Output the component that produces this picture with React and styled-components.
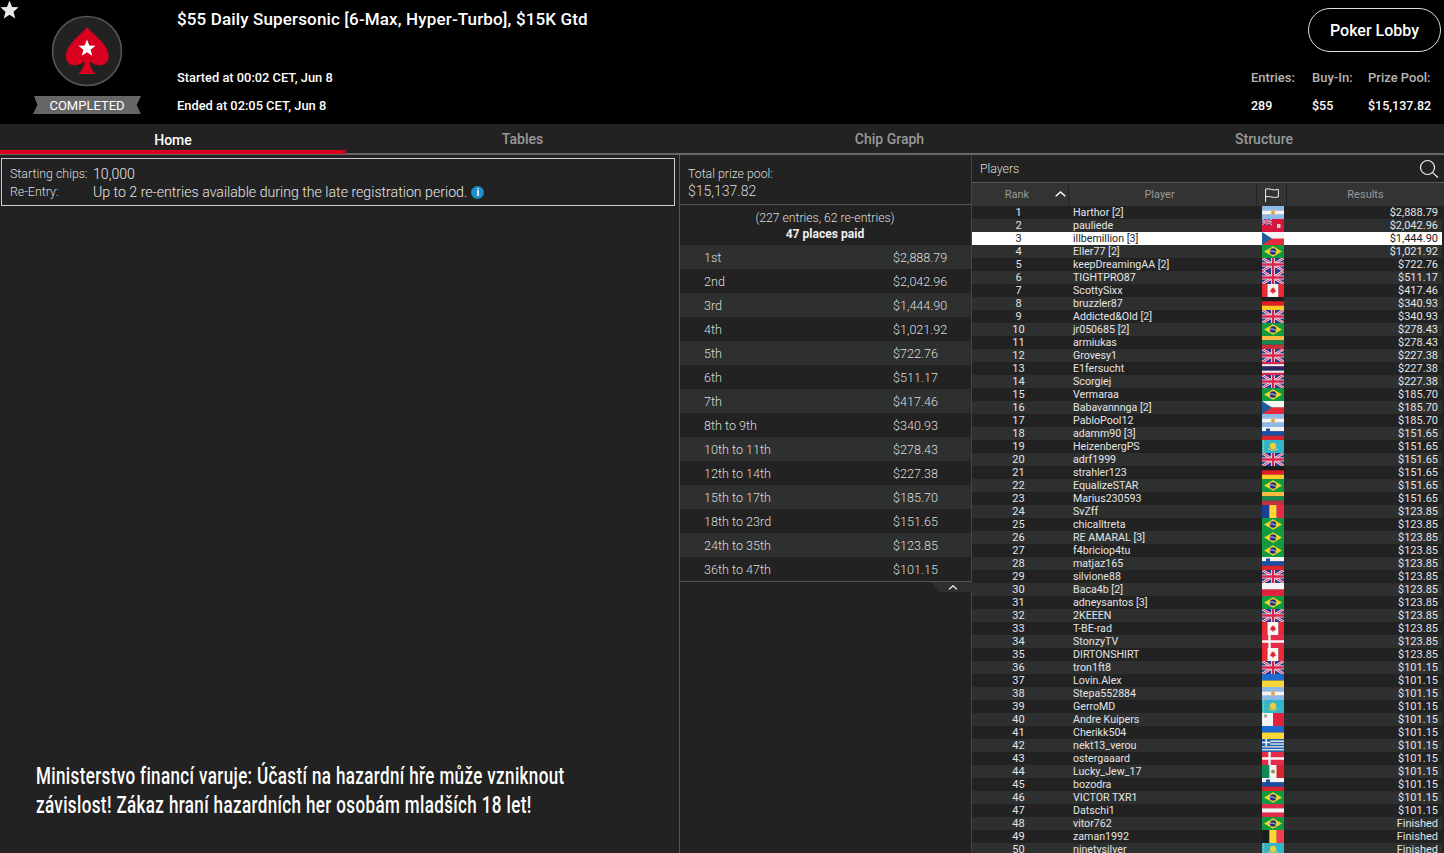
import React from "react";
import styled, { createGlobalStyle } from "styled-components";

const Global = createGlobalStyle`
  html, body { margin: 0; padding: 0; background: #222; }
  body { font-family: Roboto, "Liberation Sans", sans-serif; overflow: hidden; }
  * { box-sizing: border-box; }
`;

const Page = styled.div`
  width: 1444px; height: 853px; overflow: hidden; display: flex; flex-direction: column; background: #222; color: #fff;
`;
const Header = styled.header`
  position: relative; height: 124px; background: #000; display: flex; flex: none;
`;
const Fav = styled.svg`
  position: absolute; left: 0; top: 0; width: 19px; height: 19px;
`;
const LogoCol = styled.div`
  width: 177px; flex: none; display: flex; flex-direction: column; align-items: center; padding: 14px 3px 0 0;
`;
const Banner = styled.div`
  width: 108px; height: 18px; margin-top: 8px; background: #666; color: #fff; font-size: 13px; font-weight: 400; line-height: 19px; text-align: center;
  clip-path: polygon(1% 0, 100% 0, 96% 50%, 100% 100%, 0 100%, 4% 50%);
`;
const Info = styled.div`
  flex: 1; display: flex; flex-direction: column; padding-top: 8px;
`;
const Title = styled.h1`
  margin: 0 0 40px; font-size: 17px; line-height: 22px; font-weight: 500; letter-spacing: 0.14px; color: #fff;
`;
const InfoLine = styled.div`
  font-size: 12.85px; line-height: 16px; font-weight: 500; margin-bottom: 12px; color: #fff;
`;
const Side = styled.div`
  width: 193px; flex: none; display: flex; flex-direction: column; align-items: flex-end; padding: 8px 3px 0 0;
`;
const Lobby = styled.button`
  width: 133px; height: 44px; border: 1px solid #ddd; border-radius: 22px; background: transparent; color: #fff; font: 500 16px Roboto, sans-serif; padding: 0;
`;
const Stats = styled.div`
  display: flex; align-self: flex-start; margin-top: 18px;
`;
const Stat = styled.div`
  width: ${p => p.$w}px; display: flex; flex-direction: column; gap: 12px; font-size: 13px; line-height: 16px;
`;
const StatLabel = styled.span`
  color: #b5b5b5; font-weight: 500; white-space: nowrap;
`;
const StatValue = styled.span`
  color: #fff; font-weight: 500; font-size: 12.5px; white-space: nowrap;
`;
const Tabs = styled.nav`
  height: 31px; flex: none; display: grid; grid-template-columns: 346px 353px 381px 364px; border-bottom: 2px solid #666; background: #222;
`;
const Tab = styled.div`
  height: 30px; text-align: center; font-size: 14px; font-weight: 500; color: ${p => (p.$active ? "#fff" : "#999")};
  border-bottom: ${p => (p.$active ? "4px solid #d9001f" : "none")};
  line-height: ${p => (p.$active ? "33px" : "31px")};
  padding-left: ${p => p.$shift || 0}px;
`;
const Body = styled.main`
  flex: 1; min-height: 0; display: grid; grid-template-columns: 680px 292px 472px;
`;
const Left = styled.section`
  display: flex; flex-direction: column; justify-content: space-between; padding: 3px 4px 33px 1px; border-right: 1px solid #555;
`;
const Notice = styled.div`
  height: 48px; border: 1px solid #ccc; padding: 6px 8px; display: grid; grid-template-columns: 83px 1fr; align-content: start;
`;
const NoticeLabel = styled.span`
  font-size: 12.4px; line-height: 18px; font-weight: 300; color: #ddd; white-space: nowrap;
`;
const NoticeValue = styled.span`
  font-size: 14.15px; line-height: 18px; font-weight: 300; color: #e6e6e6; white-space: nowrap; display: flex; align-items: center; gap: 4px;
`;
const InfoDot = styled.span`
  width: 13px; height: 13px; border-radius: 50%; background: #1b8ecb; color: #fff; font-size: 10px; font-weight: 700; line-height: 13px; text-align: center;
`;
const Warning = styled.p`
  margin: 0 0 0 35px; width: 760px; font-size: 23px; line-height: 29px; font-weight: 500; letter-spacing: 0.5px; color: #fff; white-space: nowrap;
  transform: scaleX(0.74); transform-origin: left center;
`;
const Prize = styled.section`
  display: flex; flex-direction: column; min-width: 0;
`;
const PoolHead = styled.div`
  height: 50px; flex: none; padding: 11px 8px 0; border-bottom: 1px solid #555; color: #ddd; font-weight: 300;
`;
const PoolLabel = styled.div`
  font-size: 12.3px; line-height: 16px;
`;
const PoolValue = styled.div`
  font-size: 14px; line-height: 18px;
`;
const Paid = styled.div`
  height: 40px; flex: none; padding: 5px 2px 0 0; text-align: center; font-size: 12.2px; line-height: 16px; font-weight: 300; color: #ddd;
  strong { display: block; font-weight: 700; font-size: 12.1px; color: #eee; }
`;
const PrizeRow = styled.div`
  height: 24px; flex: none; display: grid; grid-template-columns: 189px 1fr; padding-left: 24px; align-items: center; font-size: 12.6px; font-weight: 300; color: #ddd;
  background: ${p => (p.$odd ? "#2e3030" : "#222")};
`;
const PrizeFoot = styled.div`
  height: 12px; flex: none; border-top: 1px solid #555; display: flex; justify-content: flex-end;
`;
const Collapse = styled.div`
  width: 41px; height: 10px; background: #2e3030; display: flex; align-items: center; justify-content: center;
  clip-path: polygon(0 0, 100% 0, 100% 100%, 22% 100%);
  padding-left: 2px;
`;
const Players = styled.section`
  display: flex; flex-direction: column; min-width: 0; overflow: hidden; border-left: 1px solid #444; margin-left: -1px;
`;
const PlayersHead = styled.div`
  height: 28px; flex: none; display: flex; align-items: center; justify-content: space-between; padding: 1px 5px 0 8px; border-bottom: 1px solid #555; font-size: 12.3px; font-weight: 300; color: #ddd;
`;
const Columns = `display: grid; grid-template-columns: 97px 188px 30px 157px;`;
const TableHead = styled.div`
  ${Columns}
  height: 23px; flex: none; background: #333; font-size: 11px; color: #999; font-weight: 400;
`;
const HeadCell = styled.div`
  position: relative; display: flex; align-items: center; justify-content: center; border-right: 1px solid #222;
  padding-right: ${p => p.$pr || 0}px;
  &:last-child { border-right: none; padding-right: 0; }
`;
const SortMark = styled.svg`
  position: absolute; right: 2px; top: 8px;
`;
const Row = styled.div`
  ${Columns}
  height: 13px; flex: none; width: 470px; font-size: 11px; line-height: 14px; white-space: nowrap;
  background: ${p => (p.$me ? "#fff" : p.$odd ? "#222" : "#2e3030")};
  color: ${p => (p.$me ? "#1c1c1c" : "#e4e4e4")};
`;
const RankCell = styled.span`
  text-align: center; padding-right: 4px;
`;
const NameCell = styled.span`
  padding-left: 4px; overflow: hidden; font-size: 10.65px;
`;
const FlagCell = styled.span`
  display: flex; justify-content: center; padding-left: 1px; overflow: hidden;
`;
const ResultCell = styled.span`
  text-align: right; padding-right: 6px;
`;
const FlagSvg = styled.svg`
  width: 22px; height: 13px; display: block; flex: none;
`;

const Band = ({ colors, vertical }) =>
  colors.map((c, i) =>
    vertical ? (
      <rect key={i} x={(i * 22) / colors.length} y="0" width={22 / colors.length + 0.1} height="13" fill={c} />
    ) : (
      <rect key={i} x="0" y={(i * 13) / colors.length} width="22" height={13 / colors.length + 0.1} fill={c} />
    )
  );

const UnionJack = () => (
  <>
    <rect width="22" height="13" fill="#2b3a8c" />
    <path d="M0 0L22 13M22 0L0 13" stroke="#f1e6ea" strokeWidth="2.6" />
    <path d="M0 0L22 13M22 0L0 13" stroke="#d8264f" strokeWidth="1" />
    <path d="M11 0V13M0 6.5H22" stroke="#f1e6ea" strokeWidth="4" />
    <path d="M11 0V13M0 6.5H22" stroke="#d8264f" strokeWidth="2.4" />
  </>
);

const FLAGS = {
  ar: () => (<><Band colors={["#8db9e6", "#f4f4f4", "#8db9e6"]} /><circle cx="11" cy="6.5" r="2" fill="#e9a23b" /></>),
  bm: () => (
    <>
      <rect width="22" height="13" fill="#d5173f" />
      <g transform="scale(.45)"><UnionJack /></g>
      <rect x="15" y="5" width="3.5" height="4" fill="#c9d3cf" />
    </>
  ),
  cz: () => (<><Band colors={["#f4f4f4", "#e6283a"]} /><path d="M0 0L10 6.5L0 13Z" fill="#1d5d9b" /></>),
  br: () => (<><rect width="22" height="13" fill="#0f9b3e" /><path d="M11 1.3L20 6.5L11 11.7L2 6.5Z" fill="#f2d22e" /><circle cx="11" cy="6.5" r="3.2" fill="#1c2f7c" /><path d="M8 6Q11 5.4 14 7.4" stroke="#eee" strokeWidth=".8" fill="none" /></>),
  gb: UnionJack,
  ca: () => (<><Band vertical colors={["#ea2a35", "#f7f7f7", "#f7f7f7", "#ea2a35"]} /><path d="M11 3L12 4.8L13.2 4.4L12.8 6.6L14 6.6L13.6 7.9L11.4 8.8V10H10.6V8.8L8.4 7.9L8 6.6L9.2 6.6L8.8 4.4L10 4.8Z" fill="#e3242f" /></>),
  de: () => <Band colors={["#1c1c1c", "#e31b23", "#fcca27"]} />,
  lt: () => <Band colors={["#fdbb3f", "#158a54", "#c4303c"]} />,
  th: () => <Band colors={["#d8264f", "#f2f2f2", "#2b2a6b", "#2b2a6b", "#f2f2f2", "#d8264f"]} />,
  si: () => (<><Band colors={["#f4f4f4", "#1a4fa8", "#d9262e"]} /><path d="M4 1.5H8V4.5Q6 6.5 4 4.5Z" fill="#1a4fa8" /></>),
  kz: () => (<><rect width="22" height="13" fill="#33b5c9" /><circle cx="11" cy="6" r="3.2" fill="#f0cf3a" /><path d="M1.5 0V13" stroke="#e2c83d" strokeWidth="1.4" strokeDasharray="1 1" /><path d="M6 8.5Q11 12 16 8.5" stroke="#f0cf3a" strokeWidth="1" fill="none" /></>),
  ro: () => <Band vertical colors={["#1b3f95", "#fcd53a", "#e6284a"]} />,
  pl: () => <Band colors={["#f5f5f5", "#e0223f"]} />,
  dk: () => (<><rect width="22" height="13" fill="#e62a4a" /><path d="M7.5 0V13M0 6.5H22" stroke="#f7f7f7" strokeWidth="2.4" /></>),
  ua: () => <Band colors={["#1c6cd0", "#fcd53a"]} />,
  mt: () => (<><Band vertical colors={["#f2f2f2", "#e0223f"]} /><circle cx="3.5" cy="3" r="1.8" fill="#a9a9a9" /></>),
  gr: () => (
    <>
      <Band colors={["#1a62b8", "#f4f4f4", "#1a62b8", "#f4f4f4", "#1a62b8", "#f4f4f4", "#1a62b8", "#f4f4f4", "#1a62b8"]} />
      <rect width="8.5" height="7.2" fill="#1a62b8" />
      <path d="M4.2 0V7.2M0 3.6H8.5" stroke="#f4f4f4" strokeWidth="1.5" />
    </>
  ),
  mx: () => (<><Band vertical colors={["#0f8a55", "#f4f4f4", "#d9262e"]} /><circle cx="11" cy="6.5" r="2" fill="#a98a52" /></>),
  at: () => <Band colors={["#e62a4a", "#f4f4f4", "#e62a4a"]} />,
  be: () => <Band vertical colors={["#1c1c1c", "#fcd53a", "#ef3e4f"]} />,
};

const Flag = ({ code }) => {
  const Art = FLAGS[code];
  return (
    <FlagSvg viewBox="0 0 22 13" preserveAspectRatio="none">
      <Art />
    </FlagSvg>
  );
};

const PRIZES = [
  ["1st", "$2,888.79"], ["2nd", "$2,042.96"], ["3rd", "$1,444.90"], ["4th", "$1,021.92"], ["5th", "$722.76"],
  ["6th", "$511.17"], ["7th", "$417.46"], ["8th to 9th", "$340.93"], ["10th to 11th", "$278.43"], ["12th to 14th", "$227.38"],
  ["15th to 17th", "$185.70"], ["18th to 23rd", "$151.65"], ["24th to 35th", "$123.85"], ["36th to 47th", "$101.15"],
];

const PLAYERS = [
  ["Harthor [2]", "ar", "$2,888.79"], ["pauliede", "bm", "$2,042.96"], ["illbemillion [3]", "cz", "$1,444.90"],
  ["Eller77 [2]", "br", "$1,021.92"], ["keepDreamingAA [2]", "gb", "$722.76"], ["TIGHTPRO87", "gb", "$511.17"],
  ["ScottySixx", "ca", "$417.46"], ["bruzzler87", "de", "$340.93"], ["Addicted&Old [2]", "gb", "$340.93"],
  ["jr050685 [2]", "br", "$278.43"], ["armiukas", "lt", "$278.43"], ["Grovesy1", "gb", "$227.38"],
  ["E1fersucht", "th", "$227.38"], ["Scorgiej", "gb", "$227.38"], ["Vermaraa", "br", "$185.70"],
  ["Babavannnga [2]", "cz", "$185.70"], ["PabloPool12", "ar", "$185.70"], ["adamm90 [3]", "si", "$151.65"],
  ["HeizenbergPS", "kz", "$151.65"], ["adrf1999", "gb", "$151.65"], ["strahler123", "de", "$151.65"],
  ["EqualizeSTAR", "br", "$151.65"], ["Marius230593", "lt", "$151.65"], ["SvZff", "ro", "$123.85"],
  ["chicalltreta", "br", "$123.85"], ["RE AMARAL [3]", "br", "$123.85"], ["f4briciop4tu", "br", "$123.85"],
  ["matjaz165", "si", "$123.85"], ["silvione88", "gb", "$123.85"], ["Baca4b [2]", "pl", "$123.85"],
  ["adneysantos [3]", "br", "$123.85"], ["2KEEEN", "gb", "$123.85"], ["T-BE-rad", "ca", "$123.85"],
  ["StonzyTV", "dk", "$123.85"], ["DIRTONSHIRT", "ca", "$123.85"], ["tron1ft8", "gb", "$101.15"],
  ["Lovin.Alex", "ua", "$101.15"], ["Stepa552884", "ar", "$101.15"], ["GerroMD", "kz", "$101.15"],
  ["Andre Kuipers", "mt", "$101.15"], ["Cherikk504", "ua", "$101.15"], ["nekt13_verou", "gr", "$101.15"],
  ["ostergaaard", "dk", "$101.15"], ["Lucky_Jew_17", "mx", "$101.15"], ["bozodra", "si", "$101.15"],
  ["VICTOR TXR1", "br", "$101.15"], ["Datschi1", "at", "$101.15"], ["vitor762", "br", "Finished"],
  ["zaman1992", "be", "Finished"], ["ninetysilver", "kz", "Finished"],
];

const Chevron = ({ w = 11, h = 6, color = "#fff" }) => (
  <svg width={w} height={h} viewBox="0 0 11 6" fill="none">
    <path d="M0.7 5.3L5.5 0.9L10.3 5.3" stroke={color} strokeWidth="1.4" />
  </svg>
);

export default function App() {
  return (
    <Page>
      <Global />
      <Header>
        <Fav viewBox="0 0 24 24">
          <path d="M12 0.5L15.2 8.7L23.5 9.3L17.1 14.8L19.2 23.3L12 18.7L4.8 23.3L6.9 14.8L0.5 9.3L8.8 8.7Z" fill="#e8e8e8" />
        </Fav>
        <LogoCol>
          <svg width="74" height="74" viewBox="0 0 74 74">
            <circle cx="37" cy="37" r="34.5" fill="#222" stroke="#555" strokeWidth="1.6" />
            <path d="M37 13C30 22 16 30 16 43C16 50 22 52 27 51C30 50.5 32 49 34.5 47C34.3 52 32 57 28 60H46C42 57 39.7 52 39.5 47C42 49 44 50.5 47 51C52 52 58.7 50 58.7 43C58.7 30 44 22 37 13Z" fill="#d9001f" />
            <path d="M37 25.5L39.3 31.5L45.5 31.8L40.6 35.7L42.3 41.7L37 38.3L31.7 41.7L33.4 35.7L28.5 31.8L34.7 31.5Z" fill="#fff" />
          </svg>
          <Banner>COMPLETED</Banner>
        </LogoCol>
        <Info>
          <Title>$55 Daily Supersonic [6-Max, Hyper-Turbo], $15K Gtd</Title>
          <InfoLine>Started at 00:02 CET, Jun 8</InfoLine>
          <InfoLine>Ended at 02:05 CET, Jun 8</InfoLine>
        </Info>
        <Side>
          <Lobby>Poker Lobby</Lobby>
          <Stats>
            <Stat $w={61}><StatLabel>Entries:</StatLabel><StatValue>289</StatValue></Stat>
            <Stat $w={56}><StatLabel>Buy-In:</StatLabel><StatValue>$55</StatValue></Stat>
            <Stat $w={70}><StatLabel>Prize Pool:</StatLabel><StatValue>$15,137.82</StatValue></Stat>
          </Stats>
        </Side>
      </Header>
      <Tabs>
        <Tab $active>Home</Tab>
        <Tab>Tables</Tab>
        <Tab>Chip Graph</Tab>
        <Tab $shift={4}>Structure</Tab>
      </Tabs>
      <Body>
        <Left>
          <Notice>
            <NoticeLabel>Starting chips:</NoticeLabel>
            <NoticeValue>10,000</NoticeValue>
            <NoticeLabel>Re-Entry:</NoticeLabel>
            <NoticeValue>
              Up to 2 re-entries available during the late registration period.
              <InfoDot>i</InfoDot>
            </NoticeValue>
          </Notice>
          <Warning>
            Ministerstvo financí varuje: Účastí na hazardní hře může vzniknout
            <br />
            závislost! Zákaz hraní hazardních her osobám mladších 18 let!
          </Warning>
        </Left>
        <Prize>
          <PoolHead>
            <PoolLabel>Total prize pool:</PoolLabel>
            <PoolValue>$15,137.82</PoolValue>
          </PoolHead>
          <Paid>
            (227 entries, 62 re-entries)
            <strong>47 places paid</strong>
          </Paid>
          {PRIZES.map(([place, amount], i) => (
            <PrizeRow key={place} $odd={i % 2 === 0}>
              <span>{place}</span>
              <span>{amount}</span>
            </PrizeRow>
          ))}
          <PrizeFoot>
            <Collapse><Chevron w={10} h={5} /></Collapse>
          </PrizeFoot>
        </Prize>
        <Players>
          <PlayersHead>
            Players
            <svg width="20" height="20" viewBox="0 0 20 20" fill="none" stroke="#eee" strokeWidth="1.2">
              <circle cx="8.5" cy="8.5" r="7" />
              <path d="M13.6 13.6L19 18.5" />
            </svg>
          </PlayersHead>
          <TableHead>
            <HeadCell $pr={6}>
              Rank
              <SortMark width="11" height="6" viewBox="0 0 11 6" fill="none">
                <path d="M0.7 5.3L5.5 0.9L10.3 5.3" stroke="#fff" strokeWidth="1.4" />
              </SortMark>
            </HeadCell>
            <HeadCell $pr={6}>Player</HeadCell>
            <HeadCell>
              <svg width="14" height="14" viewBox="0 0 14 14" fill="none" stroke="#f0f0f0" strokeWidth="1">
                <path d="M0.6 14V1C4 -0.2 8 3.2 13.4 1.4V9C8 10.6 4 7.4 0.6 8.8" />
              </svg>
            </HeadCell>
            <HeadCell>Results</HeadCell>
          </TableHead>
          {PLAYERS.map(([name, code, result], i) => (
            <Row key={name} $odd={i % 2 === 0} $me={i === 2}>
              <RankCell>{i + 1}</RankCell>
              <NameCell>{name}</NameCell>
              <FlagCell><Flag code={code} /></FlagCell>
              <ResultCell>{result}</ResultCell>
            </Row>
          ))}
        </Players>
      </Body>
    </Page>
  );
}
